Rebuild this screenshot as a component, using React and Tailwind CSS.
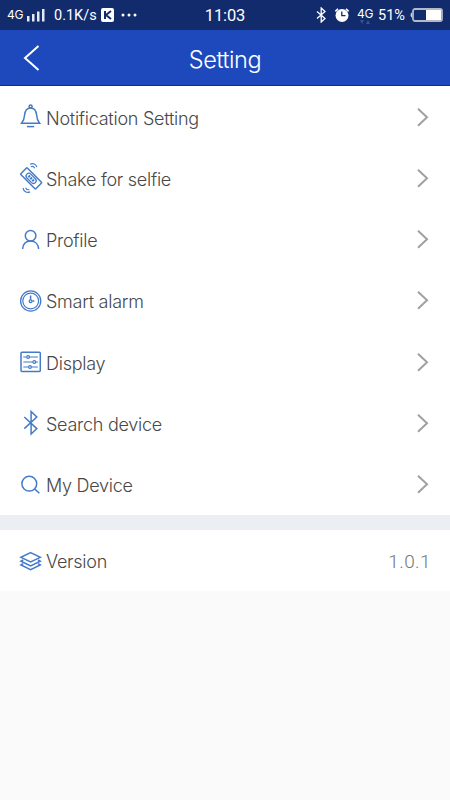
import React from "react";

const icons = {
  bell: (
    <>
      <path d="M4.600 24.200h18c-2-2.300-2.700-3.900-3-8.200-.4-4.600-2.200-7.100-6-7.100s-5.600 2.500-6 7.100c-.3 4.300-1 5.900-3 8.200Z" />
      <circle cx="13.600" cy="7.500" r="1.500" />
      <path d="M10 27.600h7.200" />
    </>
  ),
  shake: (
    <>
      <g transform="rotate(45 14 18.500)">
        <rect x="3.400" y="13.700" width="21.200" height="9.200" rx=".6" strokeWidth="1.500" />
        <rect x="8" y="15.600" width="12" height="5.400" rx="2.700" strokeWidth="1.300" />
        <path d="M10.200 18.300h7.600" strokeWidth="2.400" strokeDasharray="2 .8" />
      </g>
      <path d="M13 4.200c3-1.500 6-.2 6.900 3M13.800 6.800c1.800-.8 3.100-.2 3.900 1.400M6 27.900c.6 3.600 3.900 5.300 7 4M8.600 27.800c.5 1.600 1.700 2.300 3.700 1.800" strokeWidth="1.200" />
    </>
  ),
  profile: (
    <>
      <circle cx="13.600" cy="13.700" r="5.300" />
      <path d="M5.600 27c.4-4.900 3.400-8 8-8s7.700 3.100 8 8" />
    </>
  ),
  clock: (
    <>
      <circle cx="13.700" cy="18" r="10.100" strokeWidth="1.300" />
      <circle cx="13.700" cy="18" r="7.900" strokeWidth="1.200" />
      <path d="M13.600 12.500v4.200M15.400 18h1.900" />
      <circle cx="13.600" cy="18.300" r="1.400" strokeWidth="1.300" />
    </>
  ),
  display: (
    <>
      <rect x="4" y="8.300" width="19.300" height="19.300" rx="1" />
      <path d="M6.300 13h3.300m3 0h8.300M6.300 18h9.500m3 0h2.100M6.300 23h5.200m3 0h6.400" strokeWidth="1.200" />
      <circle cx="11.100" cy="13" r="1.400" strokeWidth="1.200" />
      <circle cx="17.300" cy="18" r="1.400" strokeWidth="1.200" />
      <circle cx="13" cy="23" r="1.400" strokeWidth="1.200" />
    </>
  ),
  bluetooth: <path d="m7.300 12 12.500 11.600-5.700 5.500V6.500l5.700 5.500L7.300 23.600" strokeWidth="1.500" />,
  search: (
    <>
      <circle cx="12.300" cy="16.700" r="7.400" />
      <path d="m17.500 21.900 4.900 4.400" />
    </>
  ),
  layers: (
    <>
      <path d="m13.600 9.600 9.700 4.700-9.700 4.700-9.700-4.700Z" />
      <path d="m6.200 17-2.300 1.300 9.700 4.600 9.700-4.600L21 17M6.200 20.700 3.900 22l9.700 4.600 9.700-4.600-2.300-1.300" />
    </>
  ),
};

function Icon({ name }) {
  return (
    <svg className="mt-px h-9 w-7 shrink-0" viewBox="0 0 28 36" fill="none" stroke="#447bc8" strokeWidth="1.500">
      {icons[name]}
    </svg>
  );
}

const rows = [
  ["bell", "Notification Setting"],
  ["shake", "Shake for selfie"],
  ["profile", "Profile"],
  ["clock", "Smart alarm"],
  ["display", "Display"],
  ["bluetooth", "Search device"],
  ["search", "My Device"],
];

function StatusBar() {
  return (
    <div className="grid h-[30px] grid-cols-[1fr_auto_1fr] items-center bg-[#122b6c] text-white">
      <div className="flex items-center pl-[7px]">
        <span className="w-[20px] text-[12px] tracking-[-0.3px]">4G</span>
        <svg className="h-[14px] w-[18px]" viewBox="0 0 18 14" fill="#e3e8f5">
          <path d="M0 8h2.500v5.500H0zM5 6h2.500v7.500H5zM10 3.500h2.500v10H10zM15 1h2.500v12.500H15z" />
        </svg>
        <span className="ml-[9px] w-[47px] whitespace-nowrap pt-px font-[Roboto] text-[14.500px]">0.1K/s</span>
        <svg className="h-[14px] w-[13px]" viewBox="0 0 13 14">
          <rect width="13" height="14" rx="2" fill="#fff" />
          <path d="M4 3v8M10 3 5 7l5 4" fill="none" stroke="#122b6c" strokeWidth="2" />
        </svg>
        <svg className="ml-[7px] h-[4px] w-[16px]" viewBox="0 0 16 4" fill="#fff">
          <circle cx="2" cy="2" r="1.500" />
          <circle cx="8" cy="2" r="1.500" />
          <circle cx="14" cy="2" r="1.500" />
        </svg>
      </div>
      <div className="pt-[2px] font-[Roboto] text-[16.500px] tracking-[-0.1px]">11:03</div>
      <div className="flex items-center justify-end pr-[7px]">
        <svg className="h-4 w-[10px]" viewBox="0 0 10 16" fill="none" stroke="#fff" strokeWidth="1.300">
          <path d="m1 4.500 8 7L5.200 15V1L9 4.500l-8 7" />
        </svg>
        <svg className="ml-2 h-4 w-4" viewBox="0 0 16 16">
          <circle cx="8" cy="8.500" r="6.500" fill="#fff" />
          <path d="M1.400 4.300 4 1.900M14.600 4.300 12 1.900" stroke="#fff" strokeWidth="1.700" />
          <path d="M7.800 4.500v4.200h3.700" fill="none" stroke="#122b6c" strokeWidth="1.300" />
        </svg>
        <div className="ml-[7px] flex w-[21px] flex-col items-start">
          <span className="text-[12px] leading-[13px] tracking-[-0.3px]">4G</span>
          <svg className="ml-[3px] h-[4px] w-[11px]" viewBox="0 0 11 4" fill="#3b528f">
            <path d="M0 0h4L2 4zM6 4h4L8 0z" />
          </svg>
        </div>
        <span className="w-[32px] whitespace-nowrap pt-[2px] font-[Roboto] text-[14.500px]">51%</span>
        <svg className="h-[14px] w-[33px]" viewBox="0 0 33 14">
          <path d="M2 4.500C0 5 0 9 2 9.500" fill="#c9cedd" />
          <rect x="3" y="1" width="29" height="12" rx="2" fill="none" stroke="#b4b9c8" strokeWidth="1.800" />
          <path d="M16 2h15v10H16z" fill="#fff" />
        </svg>
      </div>
    </div>
  );
}

export default function App() {
  return (
    <div className="flex h-[800px] w-[450px] flex-col overflow-hidden bg-[#fafafa] font-[Inter,Roboto,sans-serif]">
      <StatusBar />
      <header className="grid h-14 grid-cols-[1fr_auto_1fr] items-center border-b border-[#142f82] bg-[#1e49bd] text-white">
        <svg className="ml-[22px] h-7 w-5" viewBox="0 0 20 28" fill="none" stroke="#fff" strokeWidth="2">
          <path d="M16.500 2 3 14l13.500 12" />
        </svg>
        <h1 className="pt-1 text-[23.500px] font-light leading-7 tracking-[-0.45px]">Setting</h1>
      </header>
      <main>
        <ul className="bg-white">
          {rows.map(([icon, label]) => (
            <li key={icon} className="flex h-[61.250px] items-center pl-[17px] pr-[21px]">
              <Icon name={icon} />
              <span className="pt-[3px] pl-px text-[18px] font-light tracking-[-0.26px] text-[#484848]">{label}</span>
              <svg className="ml-auto h-5 w-3" viewBox="0 0 12 20" fill="none" stroke="#a0a0a0" strokeWidth="2">
                <path d="m1 1.800 9 8.500-9 8.500" />
              </svg>
            </li>
          ))}
        </ul>
        <div className="h-[15px] bg-[#ebeff3]" />
        <div className="flex h-[61px] items-center bg-white pl-[17px] pr-[19px]">
          <Icon name="layers" />
          <span className="pt-[3px] pl-px text-[18px] font-light tracking-[-0.26px] text-[#484848]">Version</span>
          <span className="ml-auto pt-[3px] font-[Roboto] text-[19px] font-light tracking-[0.400px] text-[#777]">1.0.1</span>
        </div>
      </main>
    </div>
  );
}
